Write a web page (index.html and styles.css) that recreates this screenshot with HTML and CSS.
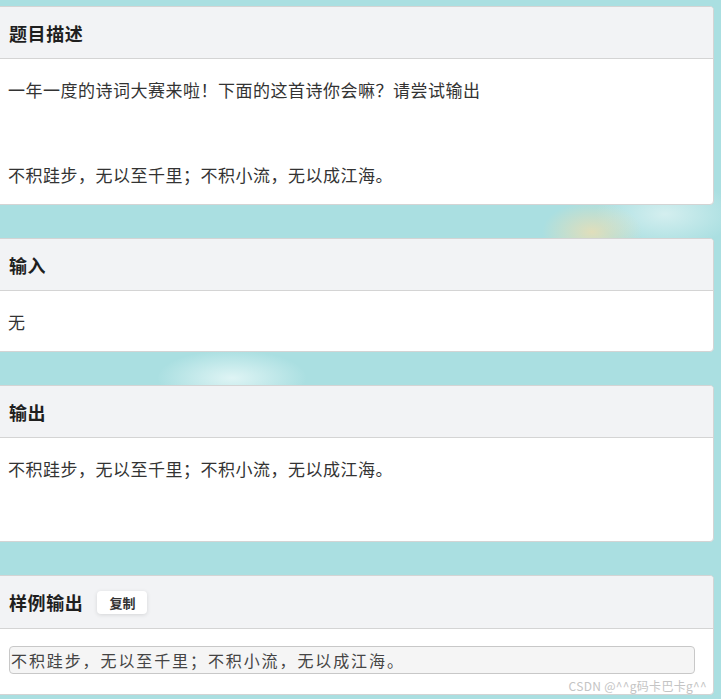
FILE: index.html
```html
<!DOCTYPE html>
<html lang="zh-CN">
<head>
<meta charset="utf-8">
<title>题目</title>
<link rel="stylesheet" href="styles.css">
</head>
<body>
<div class="page">
  <section class="card">
    <div class="card-head"><h3 class="title">题目描述</h3></div>
    <div class="card-body desc">
      <p class="line">一年一度的诗词大赛来啦！下面的这首诗你会嘛？请尝试输出</p>
      <p class="line gap">不积跬步，无以至千里；不积小流，无以成江海。</p>
    </div>
  </section>
  <section class="card">
    <div class="card-head"><h3 class="title">输入</h3></div>
    <div class="card-body">
      <p class="line">无</p>
    </div>
  </section>
  <section class="card">
    <div class="card-head"><h3 class="title">输出</h3></div>
    <div class="card-body tall">
      <p class="line">不积跬步，无以至千里；不积小流，无以成江海。</p>
    </div>
  </section>
  <section class="card">
    <div class="card-head head-sample"><h3 class="title">样例输出</h3><button class="copy">复制</button></div>
    <div class="card-body sample">
      <pre class="code">不积跬步，无以至千里；不积小流，无以成江海。</pre>
      <div class="mark">CSDN @^^g码卡巴卡g^^</div>
    </div>
  </section>
</div>
</body>
</html>
```

FILE: styles.css
```css
html, body {
  margin: 0;
  padding: 0;
}
body {
  width: 721px;
  height: 699px;
  overflow: hidden;
  font-family: "Noto Sans CJK SC", "Microsoft YaHei", sans-serif;
  background-color: #aadfe1;
  background-image:
    radial-gradient(ellipse 50px 30px at 592px 232px, rgba(234, 222, 180, 0.85), rgba(234, 222, 180, 0) 100%),
    radial-gradient(ellipse 70px 34px at 665px 214px, rgba(226, 244, 244, 0.75), rgba(226, 244, 244, 0) 100%),
    radial-gradient(ellipse 75px 28px at 232px 378px, rgba(232, 248, 248, 0.85), rgba(232, 248, 248, 0) 100%);
}
.page {
  display: flex;
  flex-direction: column;
  gap: 33px;
  padding: 6px 7px 0 0;
}
.card {
  margin-left: -10px;
  background: #fff;
  border: 1px solid #d4d4d4;
  border-radius: 4px;
  overflow: hidden;
}
.card-head {
  height: 51px;
  background: #f2f3f5;
  border-bottom: 1px solid #d4d4d4;
  display: flex;
  align-items: center;
  padding-left: 18px;
}
.head-sample {
  height: 52px;
}
.title {
  margin: 0;
  font-size: 18px;
  font-weight: 700;
  color: #1f1f1f;
  letter-spacing: 0.6px;
  line-height: 26px;
}
.card-body {
  padding: 18px 0 16px 17px;
}
.desc {
  padding-bottom: 16px;
}
.tall {
  padding-bottom: 59px;
}
.line {
  margin: 0;
  font-size: 17px;
  letter-spacing: 0.5px;
  line-height: 26px;
  color: #333;
}
.gap {
  margin-top: 59px;
}
.copy {
  margin-left: 14px;
  width: 50px;
  height: 23px;
  border: none;
  border-radius: 4px;
  background: #fff;
  box-shadow: 0 1px 4px rgba(0, 0, 0, 0.12);
  font-family: "Noto Sans CJK SC", sans-serif;
  font-size: 13px;
  font-weight: 700;
  color: #333;
  padding: 0;
}
.sample {
  padding: 17px 18px 0 18px;
  display: flex;
  flex-direction: column;
}
.code {
  margin: 0;
  height: 26px;
  border: 1px solid #c8c8c8;
  border-radius: 4px;
  background: #f5f5f5;
  padding: 0 1px;
  font-family: "Noto Sans CJK SC", sans-serif;
  font-size: 16px;
  letter-spacing: 1.9px;
  line-height: 26px;
  color: #444;
  box-sizing: content-box;
}
.mark {
  align-self: flex-end;
  margin-right: -12px;
  margin-top: 4px;
  font-family: "Noto Sans CJK SC", sans-serif;
  font-size: 12px;
  letter-spacing: 0.3px;
  line-height: 16px;
  color: #c4c4c4;
}
```
